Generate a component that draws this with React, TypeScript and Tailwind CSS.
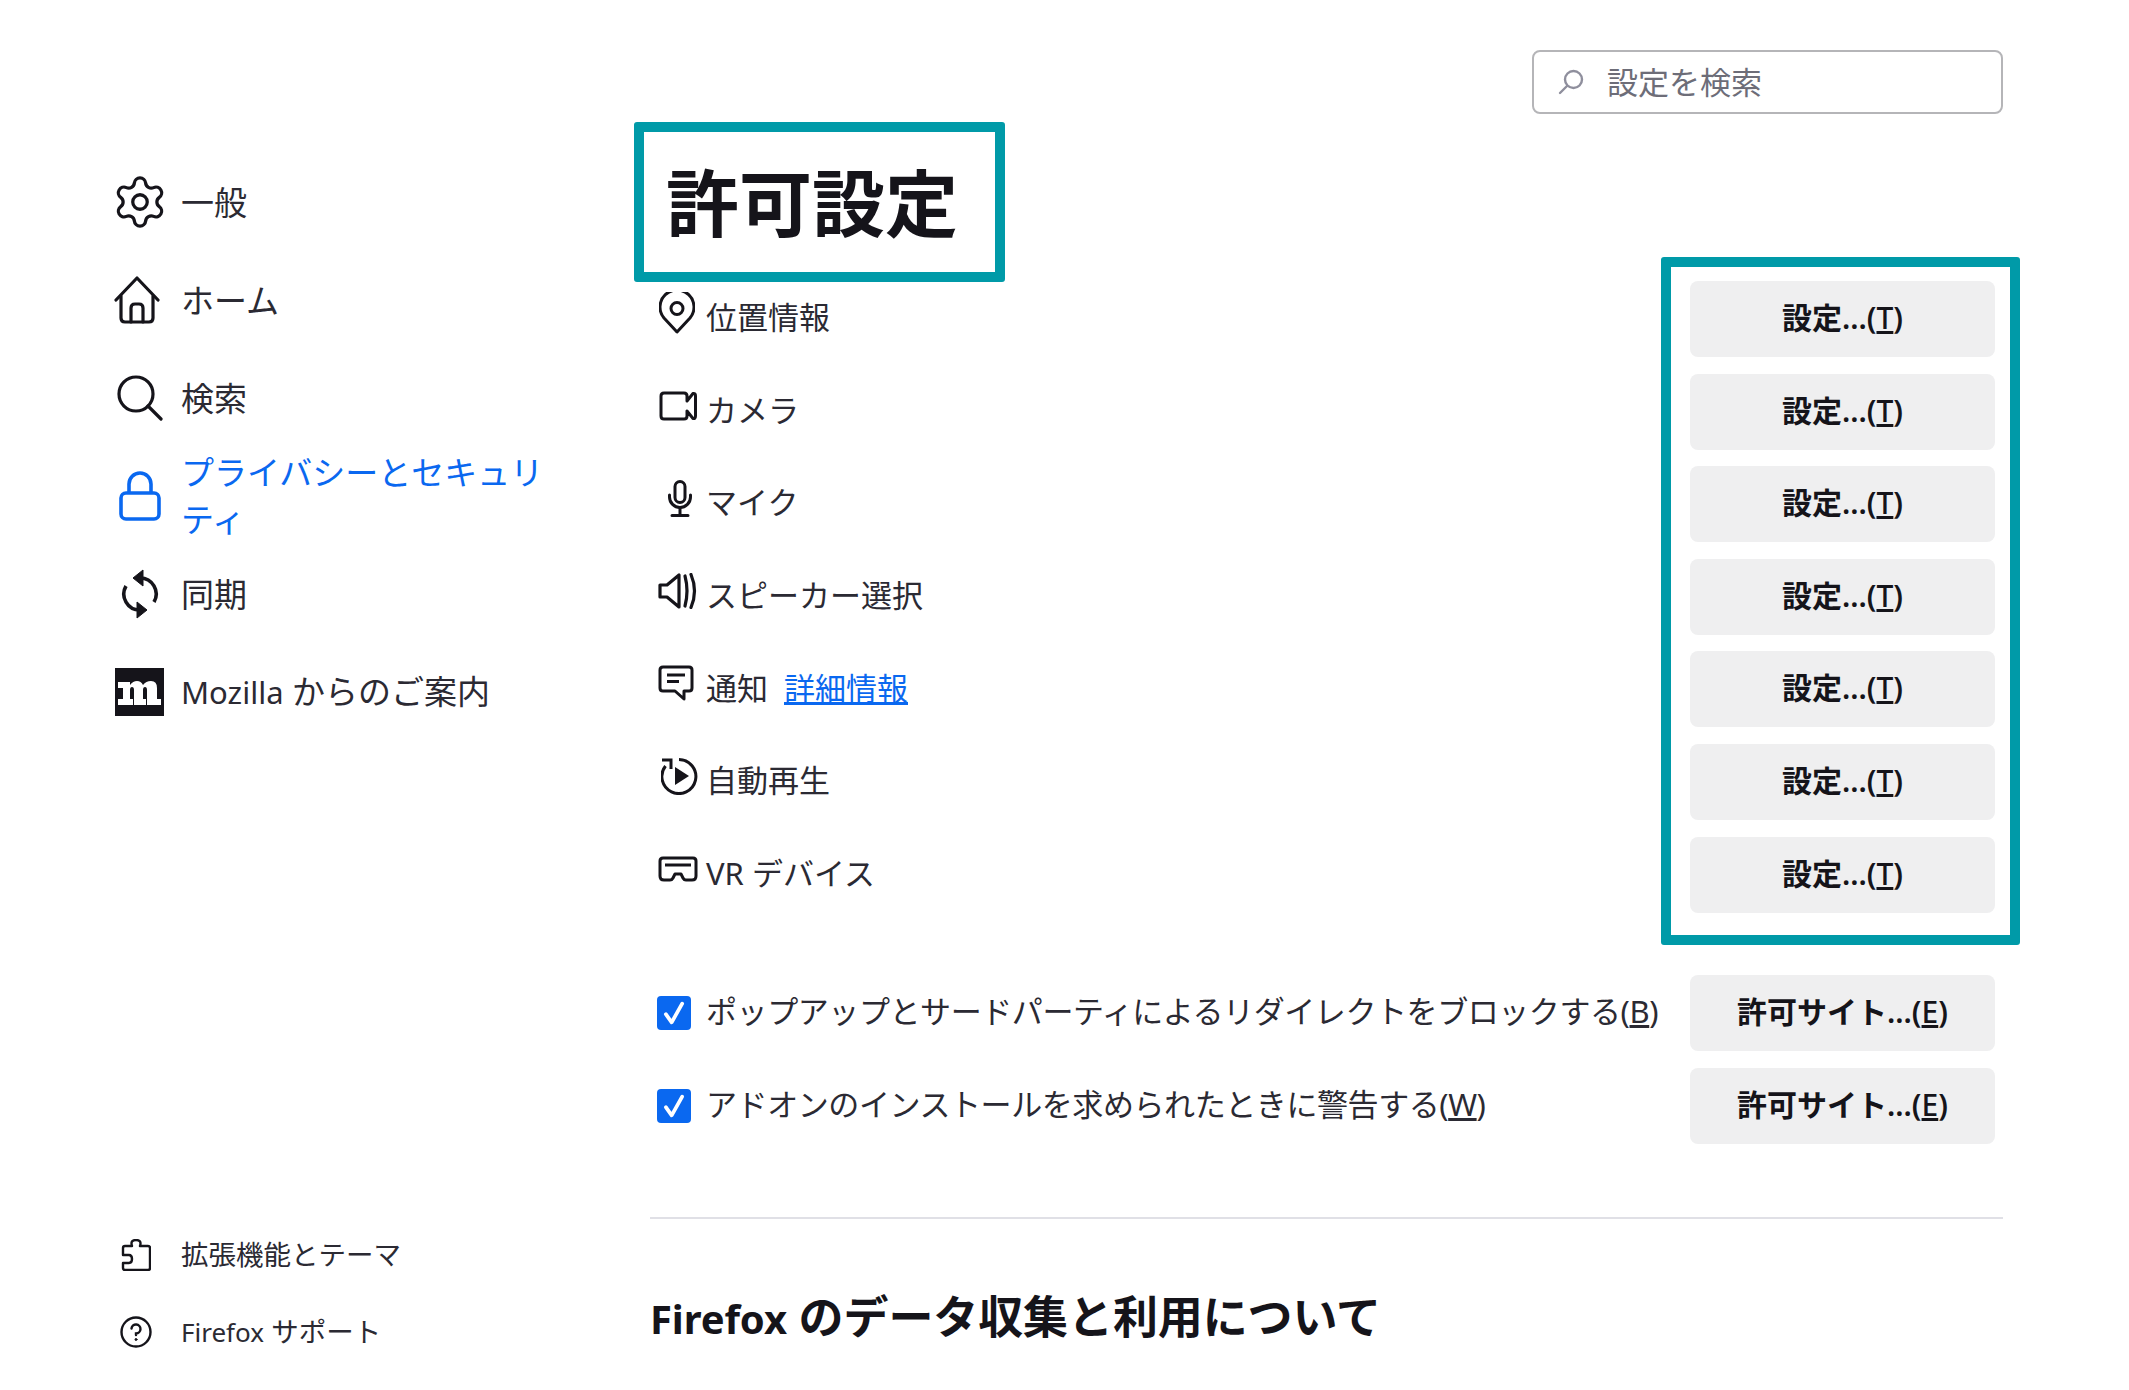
import { Settings } from "lucide-react";
import type { ReactNode } from "react";

const font = "font-['Noto_Sans','Noto_Sans_CJK_JP',sans-serif]";

function HomeIcon() {
  return (
    <svg width="46" height="48" viewBox="0 0 46 48" fill="none" stroke="#15141a" strokeWidth="3.2" strokeLinejoin="round" strokeLinecap="round">
      <path d="M2 24 L23 2 L44 24" />
      <path d="M7 20 V42 Q7 46 11 46 H35 Q39 46 39 42 V20" />
      <path d="M17 46 V32 Q17 28 21 28 H25 Q29 28 29 32 V46" />
    </svg>
  );
}

function SearchIcon() {
  return (
    <svg width="46" height="46" viewBox="0 0 46 46" fill="none" stroke="#15141a" strokeWidth="3.2" strokeLinecap="round">
      <circle cx="19" cy="19" r="17" />
      <path d="M31 31 L44 44" />
    </svg>
  );
}

function LockIcon() {
  return (
    <svg width="42" height="50" viewBox="0 0 42 50" fill="none" stroke="#0a68f0" strokeWidth="3.6" strokeLinejoin="round">
      <rect x="2" y="22" width="38" height="26" rx="5" />
      <path d="M10 22 V13 A11 11 0 0 1 32 13 V22" />
    </svg>
  );
}

function SyncIcon() {
  return (
    <svg width="40" height="50" viewBox="0 0 40 50" fill="none" stroke="#15141a" strokeWidth="3.6">
      <path d="M20 9 A16 16 0 0 1 34 33" />
      <path d="M20 41 A16 16 0 0 1 6 17" />
      <path d="M23 1 V17 L13 9 Z" fill="#15141a" strokeWidth="1" />
      <path d="M17 33 V49 L27 41 Z" fill="#15141a" strokeWidth="1" />
    </svg>
  );
}

function MozillaIcon() {
  return (
    <svg width="49" height="48" viewBox="0 0 49 48">
      <rect width="49" height="48" fill="#15141a" />
      <path
        d="M3 14 H15 V17 Q18 13 22 13 Q26 13 28 17 Q31 13 36 13 Q42 13 42 20 V31 H46 V37 H32 V22 Q32 19 30 19 Q28 19 28 22 V31 H31 V37 H19 V22 Q19 19 17 19 Q15 19 15 22 V31 H18 V37 H3 V31 H8 V20 H3 Z"
        fill="#fff"
      />
    </svg>
  );
}

function PuzzleIcon() {
  return (
    <svg width="30" height="32" viewBox="0 0 30 32" fill="none" stroke="#15141a" strokeWidth="2.4" strokeLinejoin="round">
      <path d="M11 7 Q9 1 15 1 Q21 1 19 7 H27 Q29 7 29 9 V29 Q29 31 27 31 H4 Q2 31 2 29 V24 H8 Q11 24 11 20 Q11 16 8 16 H2 V9 Q2 7 4 7 Z" />
    </svg>
  );
}

function HelpIcon() {
  return (
    <svg width="32" height="32" viewBox="0 0 32 32" fill="none" stroke="#15141a" strokeWidth="2.4" strokeLinecap="round">
      <circle cx="16" cy="16" r="14.5" />
      <path d="M11.5 12.5 A4.5 4.5 0 1 1 16 17.5 V19" />
      <circle cx="16" cy="23.5" r="1" fill="#15141a" strokeWidth="1" />
    </svg>
  );
}

function PinIcon() {
  return (
    <svg width="36" height="42" viewBox="0 0 36 42" fill="none" stroke="#15141a" strokeWidth="3" strokeLinejoin="round">
      <path d="M18 40 L5 26 A17 17 0 1 1 31 26 Z" />
      <circle cx="18" cy="16.5" r="6" strokeWidth="3" />
    </svg>
  );
}

function CameraIcon() {
  return (
    <svg width="38" height="30" viewBox="0 0 38 30" fill="none" stroke="#15141a" strokeWidth="3" strokeLinejoin="round">
      <path d="M5 2 H25 Q28 2 28 5 V10 L34 2.5 Q36.5 2 36.5 5 V25 Q36.5 28 34 27.5 L28 20 V25 Q28 28 25 28 H5 Q2 28 2 25 V5 Q2 2 5 2 Z" />
    </svg>
  );
}

function MicIcon() {
  return (
    <svg width="24" height="37" viewBox="0 0 24 37" fill="none" stroke="#15141a" strokeWidth="3" strokeLinecap="round">
      <rect x="7" y="1.5" width="10" height="21" rx="5" />
      <path d="M1.5 15 V17 A10.5 10.5 0 0 0 22.5 17 V15" />
      <path d="M12 27.5 V35 M4 35.5 H20" />
    </svg>
  );
}

function SpeakerIcon() {
  return (
    <svg width="40" height="36" viewBox="0 0 40 36" fill="none" stroke="#15141a" strokeWidth="3.2" strokeLinejoin="round" strokeLinecap="round">
      <path d="M2 12 H9 L21 2 V34 L9 24 H2 Z" />
      <path d="M27 3 Q31 18 27 33" />
      <path d="M33 1.5 Q40 18 33 34.5" />
    </svg>
  );
}

function NoticeIcon() {
  return (
    <svg width="36" height="36" viewBox="0 0 36 36" fill="none" stroke="#15141a" strokeWidth="3" strokeLinejoin="round">
      <path d="M5 2 H31 Q34 2 34 5 V23 Q34 26 31 26 H26 V34 L17 26 H5 Q2 26 2 23 V5 Q2 2 5 2 Z" />
      <path d="M9 10 H27 M9 16.5 H21" />
    </svg>
  );
}

function AutoplayIcon() {
  return (
    <svg width="39" height="38" viewBox="0 0 39 38" fill="none" stroke="#15141a" strokeWidth="3">
      <path d="M4.5 9 A17 17 0 1 0 18 2.5" />
      <path d="M1 3 H10 V12" strokeWidth="3" />
      <path d="M14 10 L28 19 L14 28 Z" fill="#15141a" stroke="none" />
    </svg>
  );
}

function VrIcon() {
  return (
    <svg width="40" height="26" viewBox="0 0 40 26" fill="none" stroke="#15141a" strokeWidth="3" strokeLinejoin="round">
      <path d="M5 2 H35 Q38 2 38 5 V20 Q38 24 34 24 H28 Q26 24 25 22 L23 18 H17 L15 22 Q14 24 12 24 H6 Q2 24 2 20 V5 Q2 2 5 2 Z" />
      <path d="M7 9 H33" />
    </svg>
  );
}

function SideItem({ icon, children, active }: { icon: ReactNode; children: ReactNode; active?: boolean }) {
  return (
    <div className={`flex h-[98px] items-center ${active ? "text-[#0a68f0]" : "text-[#2b2a33]"}`}>
      <div className="flex w-[49px] shrink-0 justify-center">{icon}</div>
      <div className="ml-[17px] w-[380px] text-[33px] leading-[47px]">{children}</div>
    </div>
  );
}

function FooterItem({ icon, children }: { icon: ReactNode; children: ReactNode }) {
  return (
    <div className="flex h-[77px] items-center text-[27.5px] text-[#2b2a33]">
      <div className="ml-[5px] flex w-[32px] justify-center">{icon}</div>
      <div className="ml-[29px]">{children}</div>
    </div>
  );
}

function ActionButton({ label, accessKey }: { label: string; accessKey: string }) {
  return (
    <button className="h-[76px] w-[305px] shrink-0 rounded-lg bg-[#efeff0] pb-[3px] text-[30px] font-bold text-[#15141a]">
      {label}
      <span className="font-semibold">
        ...(<span className="font-medium underline">{accessKey}</span>)
      </span>
    </button>
  );
}

function PermissionRow({ icon, children }: { icon: ReactNode; children: ReactNode }) {
  return (
    <div className="mb-[16.6px] flex h-[76px] items-center justify-between pr-[8px]">
      <div className="flex items-center text-[31px] text-[#2b2a33]">
        <div className="mb-[12px] flex w-[56px] justify-start pl-[8px]">{icon}</div>
        <div className="pb-[3px]">{children}</div>
      </div>
      <ActionButton label="設定" accessKey="T" />
    </div>
  );
}

function CheckRow({ children }: { children: ReactNode }) {
  return (
    <div className="mb-[16.6px] flex h-[76px] items-center justify-between pr-[8px]">
      <div className="flex items-center text-[31px] text-[#2b2a33]">
        <div className="ml-[7px] flex h-[34px] w-[34px] items-center justify-center rounded-[4px] bg-[#0a68f0]">
          <svg width="28" height="28" viewBox="0 0 24 24" fill="none" stroke="#fff" strokeWidth="3.2" strokeLinecap="round" strokeLinejoin="round">
            <path d="M5 13 L10 20 L19 4" />
          </svg>
        </div>
        <div className="ml-[15px] pb-[3px] tracking-[-0.42px]">{children}</div>
      </div>
      <ActionButton label="許可サイト" accessKey="E" />
    </div>
  );
}

export default function App() {
  return (
    <div className={`flex h-[1390px] w-[2129px] overflow-hidden bg-white ${font}`}>
      <aside className="flex w-[650px] shrink-0 flex-col pb-[20px] pl-[115px] pt-[153px]">
        <SideItem icon={<Settings size={58} strokeWidth={1.35} color="#15141a" className="shrink-0" />}>一般</SideItem>
        <SideItem icon={<div className="mr-[6px]"><HomeIcon /></div>}>ホーム</SideItem>
        <SideItem icon={<SearchIcon />}>検索</SideItem>
        <SideItem icon={<LockIcon />} active>
          プライバシーとセキュリティ
        </SideItem>
        <SideItem icon={<SyncIcon />}>同期</SideItem>
        <SideItem icon={<MozillaIcon />}>
          <span className="text-[31px]">Mozilla</span> からのご案内
        </SideItem>
        <div className="mt-auto">
          <FooterItem icon={<PuzzleIcon />}>拡張機能とテーマ</FooterItem>
          <FooterItem icon={<HelpIcon />}>
            <span className="text-[26px]">Firefox</span> サポート
          </FooterItem>
        </div>
      </aside>

      <main className="flex w-[1353px] shrink-0 flex-col pt-[50px]">
        <div className="flex h-[64px] w-[471px] items-center self-end rounded-lg border-2 border-[#b5b5b8] pl-[24px] text-[31px] text-[#6d6d78]">
          <svg width="26" height="26" viewBox="0 0 26 26" fill="none" stroke="#8f8f9d" strokeWidth="2.4" strokeLinecap="round">
            <circle cx="15.5" cy="10.5" r="8.5" />
            <path d="M9 17 L2 24" />
          </svg>
          <span className="ml-[23px]">設定を検索</span>
        </div>

        <div className="relative flex h-[167px] items-start">
          <div className="absolute left-[-16px] top-[8px] h-[160px] w-[371px] rounded-[3px] border-[10px] border-[#009aa8]" />
          <h1 className="pl-[16px] pt-[36px] text-[73px] font-bold leading-[105px] text-[#15141a]">許可設定</h1>
        </div>

        <div className="relative">
          <div className="absolute left-[1011px] top-[-24px] h-[688px] w-[359px] rounded-[3px] border-[10px] border-[#009aa8]" />
          <PermissionRow icon={<div className="ml-[1px]"><PinIcon /></div>}>位置情報</PermissionRow>
          <PermissionRow icon={<div className="ml-[1px]"><CameraIcon /></div>}>カメラ</PermissionRow>
          <PermissionRow icon={<div className="ml-[10px]"><MicIcon /></div>}>マイク</PermissionRow>
          <PermissionRow icon={<SpeakerIcon />}>スピーカー選択</PermissionRow>
          <PermissionRow icon={<NoticeIcon />}>
            通知
            <a className="ml-[16px] text-[#0a68f0] underline">詳細情報</a>
          </PermissionRow>
          <PermissionRow icon={<div className="ml-[3px]"><AutoplayIcon /></div>}>自動再生</PermissionRow>
          <PermissionRow icon={<VrIcon />}>VR デバイス</PermissionRow>

          <div className="h-[46px]" />

          <CheckRow>
            ポップアップとサードパーティによるリダイレクトをブロックする(<span className="underline">B</span>)
          </CheckRow>
          <CheckRow>
            アドオンのインストールを求められたときに警告する(<span className="underline">W</span>)
          </CheckRow>
        </div>

        <div className="mt-[56.6px] border-t-2 border-[#e0e0e6]" />
        <h2 className="mt-[68px] text-[45px] font-bold leading-[60px] tracking-[-0.1px] text-[#15141a]">
          <span className="text-[40px]">Firefox</span> のデータ収集と利用について
        </h2>
      </main>
    </div>
  );
}
